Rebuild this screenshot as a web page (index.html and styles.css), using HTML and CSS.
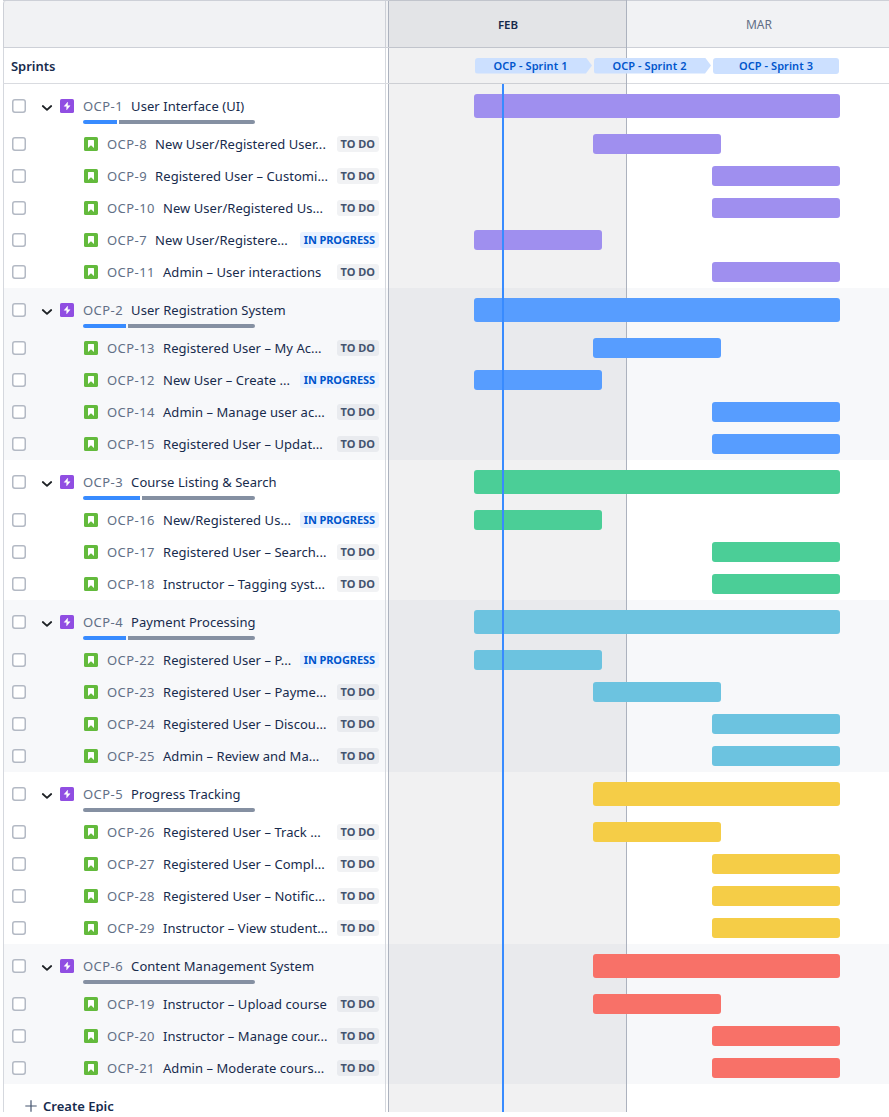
FILE: index.html
```html
<!DOCTYPE html>
<html lang="en">
<head>
<meta charset="utf-8">
<title>Roadmap</title>
<link rel="stylesheet" href="styles.css">
</head>
<body>
<svg class="defs" aria-hidden="true">
  <symbol id="check" viewBox="0 0 14 14"><rect x=".75" y=".75" width="12.5" height="12.5" rx="2.2" fill="#fff" stroke="#b3b9c4" stroke-width="1.5"/></symbol>
  <symbol id="chevron" viewBox="0 0 12 12"><path d="M1.8 4L6 7.9 10.2 4" fill="none" stroke="#1d2125" stroke-width="1.8" stroke-linecap="round" stroke-linejoin="round"/></symbol>
  <symbol id="epic" viewBox="0 0 14 14"><rect width="14" height="14" rx="1.6" fill="#904ee2"/><path d="M7.6 3.2L4.2 7.3h2.5v3.5l3.3-4.1H7.6z" fill="#fff" stroke="#fff" stroke-width=".5" stroke-linejoin="round"/></symbol>
  <symbol id="story" viewBox="0 0 14 14"><rect width="14" height="14" rx="1.6" fill="#63ba3c"/><path d="M4.4 3h5.2q.4 0 .4.4V11L7 8.2 4 11V3.400q0-.4.4-.4z" fill="#fff"/></symbol>
  <symbol id="plus" viewBox="0 0 12 12"><path d="M6 .3v11.4M.3 6h11.4" stroke="#44546f" stroke-width="1.2"/></symbol>
</svg>
<main class="roadmap">
  <header class="row months"><div class="side"></div><div class="track"><span class="month current">FEB</span><span class="month">MAR</span></div></header>
  <section class="row sprints"><div class="side">Sprints</div><div class="track"><span class="sprint arrow">OCP - Sprint 1</span><span class="sprint arrow">OCP - Sprint 2</span><span class="sprint last">OCP - Sprint 3</span></div></section>
  <div id="groups"></div>
  <footer class="row create"><div class="side"><svg class="plus"><use href="#plus"/></svg>Create Epic</div><div class="track"></div></footer>
  <div class="february"></div>
  <div class="today"></div>
</main>
<script src="roadmap.js"></script>
</body>
</html>
```
FILE: styles.css
```css
* { box-sizing: border-box; }
body { margin: 0; background: #fff; color: #172b4d; font: 13px/20px "Noto Sans", "Open Sans", sans-serif; }
.defs { position: absolute; width: 0; height: 0; }
.roadmap { position: relative; isolation: isolate; width: 886px; height: 1112px; margin-left: 3px; overflow: hidden; }
.row { display: flex; }
.side { flex: none; width: 383px; border: solid #d5d8de; border-width: 0 1px; display: flex; align-items: center; }
.track { flex: 1; margin-left: 2px; border-left: 1px solid #acb2be; }
.months { height: 48px; background: #f1f2f4; border: solid #cdd0d7; border-width: 1px 0; }
.months .side { border-color: #cdd0d7; border-top-left-radius: 3px; }
.months .track { display: flex; }
.month { width: 264px; padding-top: 2px; display: grid; place-items: center; font-size: 12px; color: #626f86; }
.month.current { width: 238px; font-size: 11.5px; font-weight: 600; color: #172b4d; }
.sprints { height: 36px; border-bottom: 1px solid #d9dbe0; }
.sprints .side { padding-left: 7px; font-weight: 600; letter-spacing: -.05px; }
.sprints .track { display: flex; align-items: center; gap: 2px; padding-left: 86px; }
.sprint { position: relative; z-index: 2; width: 117px; height: 16px; border-radius: 3px; background: #cce0ff; color: #0055cc; font-size: 11px; font-weight: 600; letter-spacing: .06px; line-height: 16px; text-align: center; padding-right: 6px; }
.sprint.arrow { clip-path: polygon(0 0, 111px 0, 117px 50%, 111px 100%, 0 100%); }
.sprint.last { width: 126px; padding-right: 0; }
.group:nth-child(even) { background: #f7f8fa; }
.task { height: 32px; }
.epic { height: 44px; }
.check { flex: none; width: 14px; height: 14px; margin-left: 8px; }
.chevron { flex: none; width: 12px; height: 12px; margin: 3px 7px 0 15px; }
.type { flex: none; width: 14px; height: 14px; }
.task .type { margin-left: 58px; }
.key { color: #626f86; margin: 0 8px 0 9px; letter-spacing: .45px; white-space: nowrap; }
.title { letter-spacing: .05px; white-space: nowrap; }
.epic .label { position: relative; display: flex; }
.progress { position: absolute; left: 9px; top: 24px; width: 172px; height: 4px; display: flex; gap: 2px; border-radius: 2px; overflow: hidden; }
.done { background: #388bff; }
.rest { flex: 1; background: #8590a2; }
.status { margin: 0 6px 0 auto; padding: 0 4px; height: 16px; border-radius: 3px; background: rgba(9, 30, 66, .06); color: #44546f; font-size: 11px; font-weight: 700; line-height: 16px; white-space: nowrap; }
.status.progressing { background: #e9f2ff; color: #0055cc; letter-spacing: -.09px; }
.bar { position: relative; z-index: 2; width: 128px; height: 20px; margin-top: 6px; border-radius: 3px; }
.epic .bar { height: 24px; margin-top: 10px; }
.s1 { margin-left: 85px; }
.s2 { margin-left: 204px; }
.s3 { margin-left: 323px; }
.s1.full { width: 366px; }
.s2.full { width: 247px; }
.purple { background: #9f8fef; }
.blue { background: #579dff; }
.green { background: #4bce97; }
.teal { background: #6cc3e0; }
.yellow { background: #f5cd47; }
.red { background: #f87168; }
.create { height: 28px; }
.create .side { height: 44px; padding-left: 21px; gap: 6px; font-weight: 600; font-size: 13px; }
.plus { width: 12px; height: 12px; }
.february { position: absolute; z-index: 1; left: 386px; top: 0; width: 238px; height: 100%; background: rgba(23, 23, 36, .06); border-right: 1px solid #acb2be; }
.today { position: absolute; z-index: 3; left: 499px; top: 84px; width: 2px; bottom: 0; background: #388bff; }
```
FILE: roadmap.js
```js
// Epic: [number, title, colour, first sprint, progress px, tasks]
// Task: [number, title, sprint, in progress]
const epics = [
  [1, "User Interface (UI)", "purple", 1, 34, [[8, "New User/Registered User...", 2], [9, "Registered User – Customi...", 3], [10, "New User/Registered Us...", 3], [7, "New User/Registere...", 1, true], [11, "Admin – User interactions", 3]]],
  [2, "User Registration System", "blue", 1, 43, [[13, "Registered User – My Ac...", 2], [12, "New User – Create ...", 1, true], [14, "Admin – Manage user ac...", 3], [15, "Registered User – Updat...", 3]]],
  [3, "Course Listing & Search", "green", 1, 57, [[16, "New/Registered Us...", 1, true], [17, "Registered User – Search...", 3], [18, "Instructor – Tagging syst...", 3]]],
  [4, "Payment Processing", "teal", 1, 43, [[22, "Registered User – P...", 1, true], [23, "Registered User – Payme...", 2], [24, "Registered User – Discou...", 3], [25, "Admin – Review and Ma...", 3]]],
  [5, "Progress Tracking", "yellow", 2, 0, [[26, "Registered User – Track ...", 2], [27, "Registered User – Compl...", 3], [28, "Registered User – Notific...", 3], [29, "Instructor – View student...", 3]]],
  [6, "Content Management System", "red", 2, 0, [[19, "Instructor – Upload course", 2], [20, "Instructor – Manage cour...", 3], [21, "Admin – Moderate cours...", 3]]]
];
const icon = (name, cls) => `<svg class="${cls}"><use href="#${name}"/></svg>`;
const label = (n, title) => `<span class="key">OCP-${n}</span><span class="title">${title.replace("&", "&amp;")}</span>`;
const row = (cls, side, bar) => `<div class="row ${cls}"><div class="side">${icon("check", "check")}${side}</div><div class="track"><div class="bar ${bar}"></div></div></div>`;
document.getElementById("groups").innerHTML = epics.map(([n, title, color, start, done, tasks]) => {
  const finished = done ? `<span class="done" style="width:${done}px"></span>` : "";
  const epic = row("epic", icon("chevron", "chevron") + icon("epic", "type") + `<div class="label">${label(n, title)}<div class="progress">${finished}<span class="rest"></span></div></div>`, `${color} full s${start}`);
  return `<section class="group">${epic}${tasks.map(([id, name, sprint, active]) =>
    row("task", icon("story", "type") + label(id, name) + `<span class="status${active ? " progressing" : ""}">${active ? "IN PROGRESS" : "TO DO"}</span>`, `${color} s${sprint}`)).join("")}</section>`;
}).join("");
```
